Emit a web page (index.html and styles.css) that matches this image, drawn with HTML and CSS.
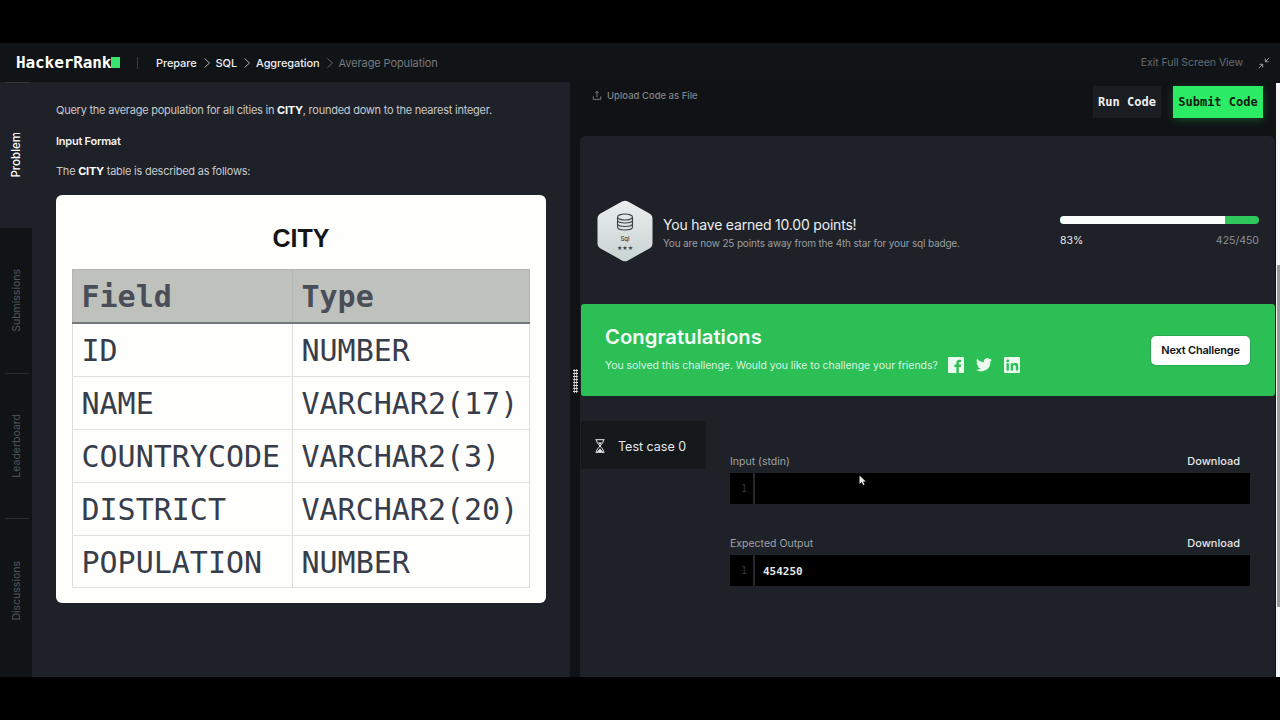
FILE: index.html
```html
<!DOCTYPE html>
<html lang="en">
<head>
<meta charset="utf-8">
<title>Average Population | HackerRank</title>
<link rel="stylesheet" href="styles.css">
</head>
<body>
<div class="screen">
  <header class="topbar">
    <div class="logo"><span>HackerRank</span><i class="logo-mark"></i></div>
    <div class="divider"></div>
    <nav class="crumbs">
      <a>Prepare</a>
      <svg class="chev" viewBox="0 0 8 12"><path d="M1.5 1.5 6.5 6l-5 4.5"/></svg>
      <a>SQL</a>
      <svg class="chev" viewBox="0 0 8 12"><path d="M1.5 1.5 6.5 6l-5 4.5"/></svg>
      <a>Aggregation</a>
      <svg class="chev dim" viewBox="0 0 8 12"><path d="M1.5 1.5 6.5 6l-5 4.5"/></svg>
      <span class="current">Average Population</span>
    </nav>
    <div class="exit">
      <span>Exit Full Screen View</span>
      <svg class="exit-icon" viewBox="0 0 14 14"><path d="M8.5 5.5 13 1M8.5 1.8v3.7h3.7M5.5 8.5 1 13M5.5 12.2V8.5H1.8"/></svg>
    </div>
  </header>

  <div class="workspace">
    <aside class="tabs">
      <div class="tab active"><span>Problem</span></div>
      <div class="tab"><span>Submissions</span></div>
      <div class="tab"><span>Leaderboard</span></div>
      <div class="tab last"><span>Discussions</span></div>
    </aside>

    <section class="problem">
      <p class="para">Query the average population for all cities in <b>CITY</b>, rounded down to the nearest integer.</p>
      <p class="para heading">Input Format</p>
      <p class="para">The <b>CITY</b> table is described as follows:</p>
      <figure class="figure">
        <figcaption>CITY</figcaption>
        <table class="schema">
          <thead><tr><th class="c1">Field</th><th>Type</th></tr></thead>
          <tbody>
            <tr><td class="c1">ID</td><td>NUMBER</td></tr>
            <tr><td class="c1">NAME</td><td>VARCHAR2(17)</td></tr>
            <tr><td class="c1">COUNTRYCODE</td><td>VARCHAR2(3)</td></tr>
            <tr><td class="c1">DISTRICT</td><td>VARCHAR2(20)</td></tr>
            <tr class="last-row"><td class="c1">POPULATION</td><td>NUMBER</td></tr>
          </tbody>
        </table>
      </figure>
    </section>

    <section class="editor">
      <div class="grip"></div>
      <div class="toolbar">
        <div class="upload">
          <svg class="upload-icon" viewBox="0 0 12 12"><path d="M6 8V1.2M4 3 6 1l2 2M1.5 7v3.600h9V7"/></svg>
          <span>Upload Code as File</span>
        </div>
        <div class="actions">
          <button class="btn run">Run Code</button>
          <button class="btn submit">Submit Code</button>
        </div>
      </div>

      <div class="result">
        <div class="points">
          <svg class="badge" viewBox="0 0 56 62">
            <defs><linearGradient id="badgefill" x1="0" y1="0" x2="0" y2="1"><stop offset="0" stop-color="#e9eeee"/><stop offset="1" stop-color="#c9d3d2"/></linearGradient></defs>
            <path class="hex" d="M25 1.600a6 6 0 0 1 6 0l21.500 12a6 6 0 0 1 3 5.200v24.400a6 6 0 0 1-3 5.200l-21.500 12a6 6 0 0 1-6 0l-21.500-12a6 6 0 0 1-3-5.200V18.800a6 6 0 0 1 3-5.200z"/>
            <g class="db">
              <ellipse cx="28" cy="17" rx="7.500" ry="3"/>
              <path d="M20.500 17v3c0 1.700 3.400 3 7.500 3s7.500-1.300 7.500-3v-3M20.500 20v3.500c0 1.700 3.400 3 7.500 3s7.500-1.300 7.500-3V20M20.500 23.500V27c0 1.700 3.400 3 7.500 3s7.500-1.300 7.500-3v-3.500"/>
            </g>
            <text class="badge-name" x="28" y="41">Sql</text>
            <text class="badge-stars" x="28" y="50">★★★</text>
          </svg>
          <div class="earned">
            <div class="earned-title">You have earned 10.00 points!</div>
            <div class="earned-sub">You are now 25 points away from the 4th star for your sql badge.</div>
          </div>
          <div class="progress">
            <div class="track"><div class="fill"></div></div>
            <div class="progress-labels"><span class="pct">83%</span><span class="count">425/450</span></div>
          </div>
        </div>

        <div class="banner">
          <div class="banner-copy">
            <h2>Congratulations</h2>
            <div class="share">
              <span>You solved this challenge. Would you like to challenge your friends?</span>
              <svg class="social" viewBox="0 0 16 16"><path d="M1 0h14a1 1 0 0 1 1 1v14a1 1 0 0 1-1 1h-4.200v-6h2l.3-2.400h-2.300V6.100c0-.7.2-1.200 1.200-1.200h1.200V2.800c-.2 0-.9-.1-1.800-.1-1.800 0-3 1.100-3 3.100v1.800h-2V10h2v6H1a1 1 0 0 1-1-1V1a1 1 0 0 1 1-1z"/></svg>
              <svg class="social" viewBox="0 0 16 14"><path d="M16 1.700a6.500 6.500 0 0 1-1.900.5A3.300 3.300 0 0 0 15.600.4a6.500 6.500 0 0 1-2.100.8 3.300 3.300 0 0 0-5.600 3A9.300 9.300 0 0 1 1.100.8a3.300 3.300 0 0 0 1 4.400 3.200 3.200 0 0 1-1.500-.4c0 1.600 1.100 3 2.600 3.300a3.300 3.300 0 0 1-1.500.1 3.300 3.300 0 0 0 3.100 2.300A6.600 6.600 0 0 1 0 11.800 9.300 9.300 0 0 0 14.400 3.500c.6-.5 1.200-1.100 1.600-1.800z"/></svg>
              <svg class="social" viewBox="0 0 16 16"><path fill-rule="evenodd" d="M1 0h14a1 1 0 0 1 1 1v14a1 1 0 0 1-1 1H1a1 1 0 0 1-1-1V1a1 1 0 0 1 1-1zm1.500 6.200v7.300h2.400V6.200zm1.200-3.700a1.400 1.400 0 1 0 0 2.800 1.400 1.400 0 0 0 0-2.800zm3 3.700v7.300h2.400V9.800c0-1 .2-1.900 1.400-1.900s1.300 1.100 1.300 2v3.600h2.400V9.400c0-2-.4-3.400-2.800-3.400-1.100 0-1.900.6-2.200 1.200V6.200z"/></svg>
            </div>
          </div>
          <button class="next">Next Challenge</button>
        </div>

        <div class="cases">
          <div class="case-tab">
            <svg class="hourglass" viewBox="0 0 10 14"><path d="M.5.7h9M.5 13.300h9M1.500.7c0 3.500 2.300 4.600 3.500 6.300 1.200-1.700 3.500-2.800 3.500-6.300M1.500 13.300C1.500 9.800 3.800 8.700 5 7c1.200 1.700 3.500 2.800 3.500 6.300"/><path class="sand" d="M2 13l3-3.500 3 3.500zM3 3.500h4L5 6z"/></svg>
            <span>Test case 0</span>
          </div>
          <div class="case-detail">
            <div class="io">
              <div class="io-head"><span class="io-label">Input (stdin)</span><span class="io-dl">Download</span></div>
              <div class="code"><span class="gutter">1</span><span class="line"></span></div>
            </div>
            <div class="io">
              <div class="io-head"><span class="io-label">Expected Output</span><span class="io-dl">Download</span></div>
              <div class="code"><span class="gutter">1</span><span class="line">454250</span></div>
            </div>
            <svg class="cursor" viewBox="0 0 8 11"><path d="M.5.500v8.500l2.200-2 1.500 3.200 1.300-.6-1.400-3h2.700z"/></svg>
          </div>
        </div>
      </div>
      <div class="scrollbar"><div class="thumb"></div></div>
    </section>
  </div>
</div>
</body>
</html>
```
FILE: styles.css
```css
* { box-sizing: border-box; }
html, body { margin: 0; height: 100%; background: #000; overflow: hidden; }
body { font-family: Inter, "Noto Sans", sans-serif; color: #d8dadd; padding-top: 43px; }
.screen { width: 1280px; height: 634px; display: flex; flex-direction: column; background: #111417; }

.topbar { height: 39px; flex: none; display: flex; align-items: center; padding: 0 10px 0 16px; background: #111417; }
.logo { display: flex; align-items: center; font: 700 16px "DejaVu Sans Mono", monospace; color: #fff; letter-spacing: -.1px; width: 104px; flex: none; }
.logo-mark { width: 9px; height: 11px; background: #39e46f; flex: none; }
.divider { width: 1px; height: 12px; background: #3b3f44; margin-left: 17px; }
.crumbs { display: flex; align-items: center; margin-left: 18px; font-size: 11px; letter-spacing: -.1px; font-weight: 500; color: #eceef0; }
.chev { width: 8px; height: 12px; margin: 0 5px 0 6px; fill: none; stroke: #a8acb0; stroke-width: 1; }
.chev.dim { stroke: #5d6166; }
.current { color: #75797d; font-weight: 400; }
.exit { margin-left: auto; display: flex; align-items: center; gap: 15px; font-size: 10.500px; letter-spacing: -.05px; color: #666a6e; }
.exit-icon { width: 12px; height: 12px; fill: none; stroke: #9da1a5; stroke-width: 1.100; }

.workspace { flex: 1; min-height: 0; display: flex; }

.tabs { width: 32px; flex: none; display: flex; flex-direction: column; background: #111417; }
.tab { height: 145px; display: flex; justify-content: center; padding: 50px 0 0; font-size: 10.500px; color: #50545a; position: relative; }
.tab span { writing-mode: vertical-rl; transform: rotate(180deg); height: fit-content; }
.tab::before { content: ""; position: absolute; top: 0; left: 5px; right: 3px; height: 1px; background: #272a2f; }
.tab.active { height: 146px; background: #1e2128; color: #fff; font-size: 11.500px; font-weight: 500; }
.tab.active::before { background: #33363b; }
.tab + .tab { padding-top: 41px; }
.tab.last { flex: 1; padding-top: 43px; }
.tab.active + .tab::before { display: none; }

.problem { width: 538px; flex: none; background: #1e2128; padding: 21px 0 0 24px; }
.para { margin: 0 0 15.500px; font-size: 11px; letter-spacing: -.24px; line-height: 15px; color: #c7c9cc; }
.para b { color: #fff; font-weight: 700; }
.heading { color: #f2f3f4; font-weight: 600; }
.figure { margin: 0; width: 490px; height: 408px; background: #fefefc; border-radius: 6px; padding: 28px 16px 0; }
.figure figcaption { font: 700 25px/30px "Liberation Sans", sans-serif; color: #151618; text-align: center; margin: 0 0 16px; }
.schema { width: 458px; border-collapse: collapse; table-layout: fixed; font: 30px "DejaVu Sans Mono", monospace; color: #383d4b; }
.schema th, .schema td { height: 53px; padding: 2px 0 0 8.500px; border: 1px solid #dfe0dc; text-align: left; white-space: nowrap; overflow: hidden; }
.schema th { height: 54px; background: #bfc1bd; border-color: #b4b6b2; border-bottom: 2px solid #73767a; color: #4a4e58; font-weight: 700; }
.schema .last-row td { height: 52px; }
.schema .c1 { width: 220px; }

.editor { flex: 1; min-width: 0; display: flex; flex-direction: column; background: #101215; padding: 0 5px 0 10px; position: relative; }
.grip { position: absolute; left: 3px; top: 287px; width: 5px; height: 24px; background: radial-gradient(circle, #d8dadc 0 1px, transparent 1.200px) 0 0 / 2.500px 3px; }
.toolbar { height: 54px; flex: none; display: flex; justify-content: space-between; }
.upload { display: flex; align-items: center; gap: 5px; height: 26px; margin-left: 12px; font-size: 9.500px; font-weight: 500; color: #7f8388; }
.upload-icon { width: 10px; height: 11px; fill: none; stroke: #8a8e92; stroke-width: 1; }
.actions { display: flex; gap: 12px; align-items: flex-start; padding-top: 4px; margin-right: 12px; }
.btn { height: 32px; border: 0; padding: 0; font: 700 12px "DejaVu Sans Mono", monospace; }
.run { width: 68px; background: #1a1d21; color: #f0f1f2; }
.submit { width: 90px; background: #2bec64; color: #0f1a12; box-shadow: 0 2px 10px rgba(43,236,100,.25); }

.result { flex: 1; min-height: 0; background: #1e2128; border-radius: 6px 6px 0 0; }
.points { height: 168px; display: flex; align-items: flex-start; padding: 64px 16px 0 17px; }
.badge { width: 56px; height: 62px; flex: none; }
.hex { fill: url(#badgefill); }
.db { fill: none; stroke: #3c4146; stroke-width: 1.100; }
.badge-name { font: 500 6px Inter, sans-serif; fill: #3c4146; text-anchor: middle; }
.badge-stars { font: 6px "DejaVu Sans", sans-serif; fill: #3c4146; text-anchor: middle; }
.earned { margin: 16px 0 0 10px; }
.earned-title { font-size: 14px; letter-spacing: -.2px; line-height: 18px; color: #eceef0; }
.earned-sub { font-size: 10px; letter-spacing: -.16px; line-height: 15px; margin-top: 2px; color: #9a9ea3; }
.progress { width: 199px; margin: 16px 0 0 auto; }
.track { height: 8px; background: #2ec95a; border-radius: 4px; overflow: hidden; }
.fill { width: 83%; height: 100%; background: #fbfdfc; }
.progress-labels { display: flex; justify-content: space-between; margin-top: 10px; font-size: 10.500px; line-height: 14px; }
.pct { color: #e4e6e8; }
.count { color: #8d9196; }

.banner { margin-left: 1px; height: 92px; background: #2bbf55; border-radius: 3px; display: flex; align-items: center; justify-content: space-between; padding: 0 25px 0 24px; }
.banner-copy { margin-top: -3px; }
.banner h2 { margin: 0 0 7px; font-size: 20.300px; line-height: 26px; font-weight: 600; color: #f3fbf5; }
.share { display: flex; align-items: center; gap: 10px; font-size: 10.500px; letter-spacing: -.05px; color: #d9f4e1; }
.social { width: 16px; height: 16px; fill: #eafaef; margin-right: 2px; }
.next { width: 99px; height: 29px; border: 0; padding: 0; background: #fff; border-radius: 5px; font: 600 11px Inter, sans-serif; letter-spacing: -.2px; color: #111; box-shadow: 0 0 0 1px rgba(30,90,50,.2); }

.cases { display: flex; padding: 25px 25px 0 1px; }
.case-tab { width: 125px; height: 48px; flex: none; display: flex; align-items: center; gap: 13px; padding: 2px 0 0 14px; background: #16191c; font-size: 12.500px; color: #e8eaec; }
.hourglass { width: 10px; height: 14px; fill: none; stroke: #e8eaec; stroke-width: 1; }
.sand { fill: #e8eaec; stroke: none; }
.case-detail { flex: 1; margin-left: 24px; padding-top: 32px; display: flex; flex-direction: column; gap: 31px; position: relative; }
.io-head { height: 20px; display: flex; justify-content: space-between; align-items: flex-start; padding-right: 10px; font-size: 11px; line-height: 17px; }
.io-label { color: #9ea2a6; font-size: 10.500px; }
.io-dl { color: #e4e6e8; font-weight: 500; }
.code { height: 31px; background: #000; display: flex; align-items: center; }
.gutter { width: 25px; height: 100%; flex: none; border-right: 2px solid #26282c; padding: 0 0 0 11px; display: flex; align-items: center; font: 10px "DejaVu Sans Mono", monospace; color: #33363a; }
.line { padding: 1px 0 0 8px; font: 700 11px "DejaVu Sans Mono", monospace; color: #e6e7e8; }
.cursor { position: absolute; left: 129px; top: 54px; width: 8px; height: 11px; fill: #e8e8e8; }

.scrollbar { position: absolute; right: 0; top: 1px; bottom: 0; width: 4px; background: #f4f5f5; }
.thumb { position: absolute; top: 182px; height: 342px; left: 1px; right: 0; background: #9b9c9d; }
```
